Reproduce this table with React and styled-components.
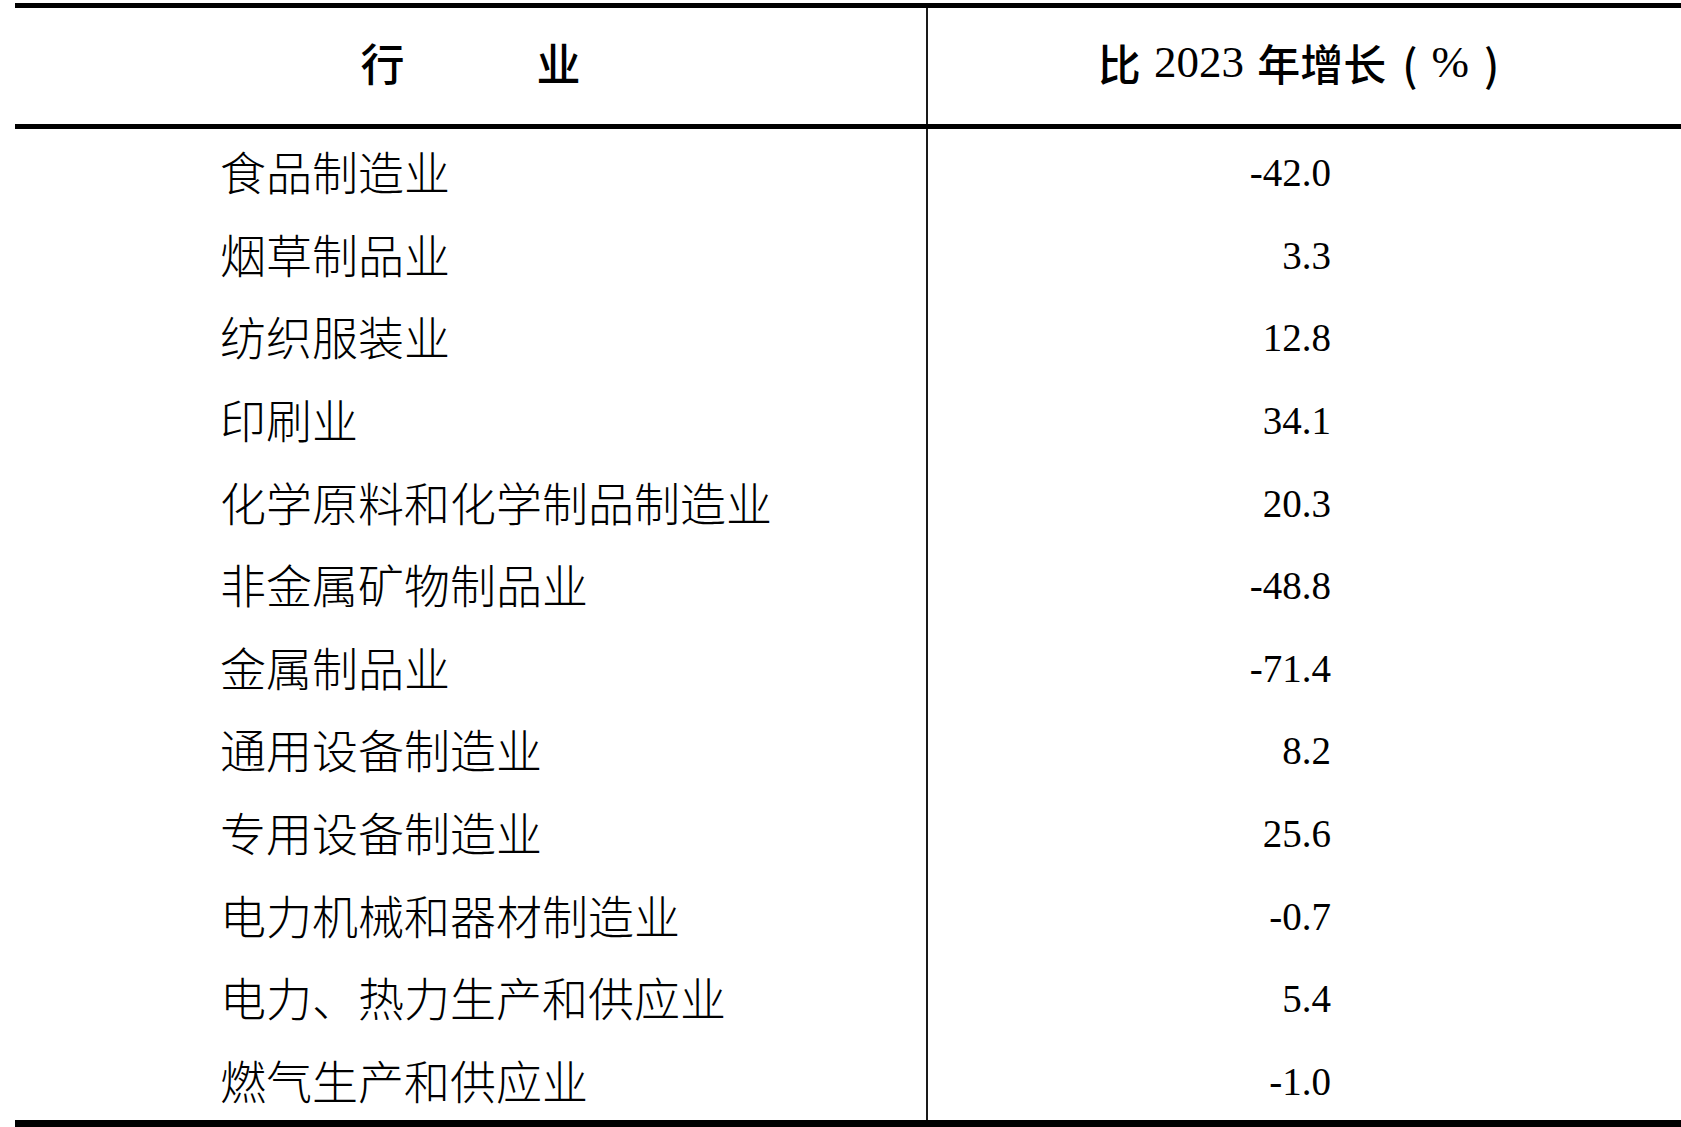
import React from 'react'
import styled, { createGlobalStyle } from 'styled-components'

const GlobalStyle = createGlobalStyle`
  html, body {
    margin: 0;
    padding: 0;
    background: #fff;
    color: #000;
  }
`

const Page = styled.div`
  padding: 3px 0 0 15px;
  width: 1666px;
`

const Table = styled.div`
  border-top: 5px solid #000;
  border-bottom: 7px solid #000;
`

const Row = styled.div`
  display: grid;
  grid-template-columns: 913px 1fr;
  height: ${p => p.height}px;
  border-bottom: ${p => (p.head ? '5px solid #000' : 'none')};
`

const NameCell = styled.div`
  display: flex;
  align-items: center;
  justify-content: ${p => (p.head ? 'center' : 'flex-start')};
  padding: ${p => (p.head ? '0 0 8px 0' : '0 0 0 205px')};
  border-right: 2px solid #1a1a1a;
  font-family: "Noto Sans CJK SC", sans-serif;
  font-size: ${p => (p.head ? 44 : 46)}px;
  font-weight: ${p => (p.head ? 500 : 300)};
  white-space: nowrap;
`

const ValueCell = styled.div`
  display: flex;
  align-items: center;
  justify-content: ${p => (p.head ? 'center' : 'flex-end')};
  padding: ${p => (p.head ? '0 14px 8px 0' : '5px 350px 0 0')};
  font-family: "Liberation Serif", "Noto Sans CJK SC", serif;
  font-size: ${p => (p.head ? 45 : 39)}px;
  white-space: nowrap;
`

const Cjk = styled.span`
  font-family: "Noto Sans CJK SC", sans-serif;
  font-size: 43px;
  font-weight: 500;
  margin: 0 ${p => p.gap || 0}px 0 ${p => p.lead ?? p.gap ?? 0}px;
`

const rows = [
  ['食品制造业', '-42.0'],
  ['烟草制品业', '3.3'],
  ['纺织服装业', '12.8'],
  ['印刷业', '34.1'],
  ['化学原料和化学制品制造业', '20.3'],
  ['非金属矿物制品业', '-48.8'],
  ['金属制品业', '-71.4'],
  ['通用设备制造业', '8.2'],
  ['专用设备制造业', '25.6'],
  ['电力机械和器材制造业', '-0.7'],
  ['电力、热力生产和供应业', '5.4'],
  ['燃气生产和供应业', '-1.0'],
]

export default function App() {
  return (
    <Page>
      <GlobalStyle />
      <Table>
        <Row head height={116}>
          <NameCell head>行　　　业</NameCell>
          <ValueCell head>
            <Cjk gap={2}>比</Cjk>&nbsp;2023&nbsp;<Cjk lead={2}>年增长</Cjk>
            <Cjk lead={16} gap={14}>(</Cjk>%<Cjk gap={0} lead={15}>)</Cjk>
          </ValueCell>
        </Row>
        {rows.map(([name, value]) => (
          <Row key={name} height={82.6}>
            <NameCell>{name}</NameCell>
            <ValueCell>{value}</ValueCell>
          </Row>
        ))}
      </Table>
    </Page>
  )
}
